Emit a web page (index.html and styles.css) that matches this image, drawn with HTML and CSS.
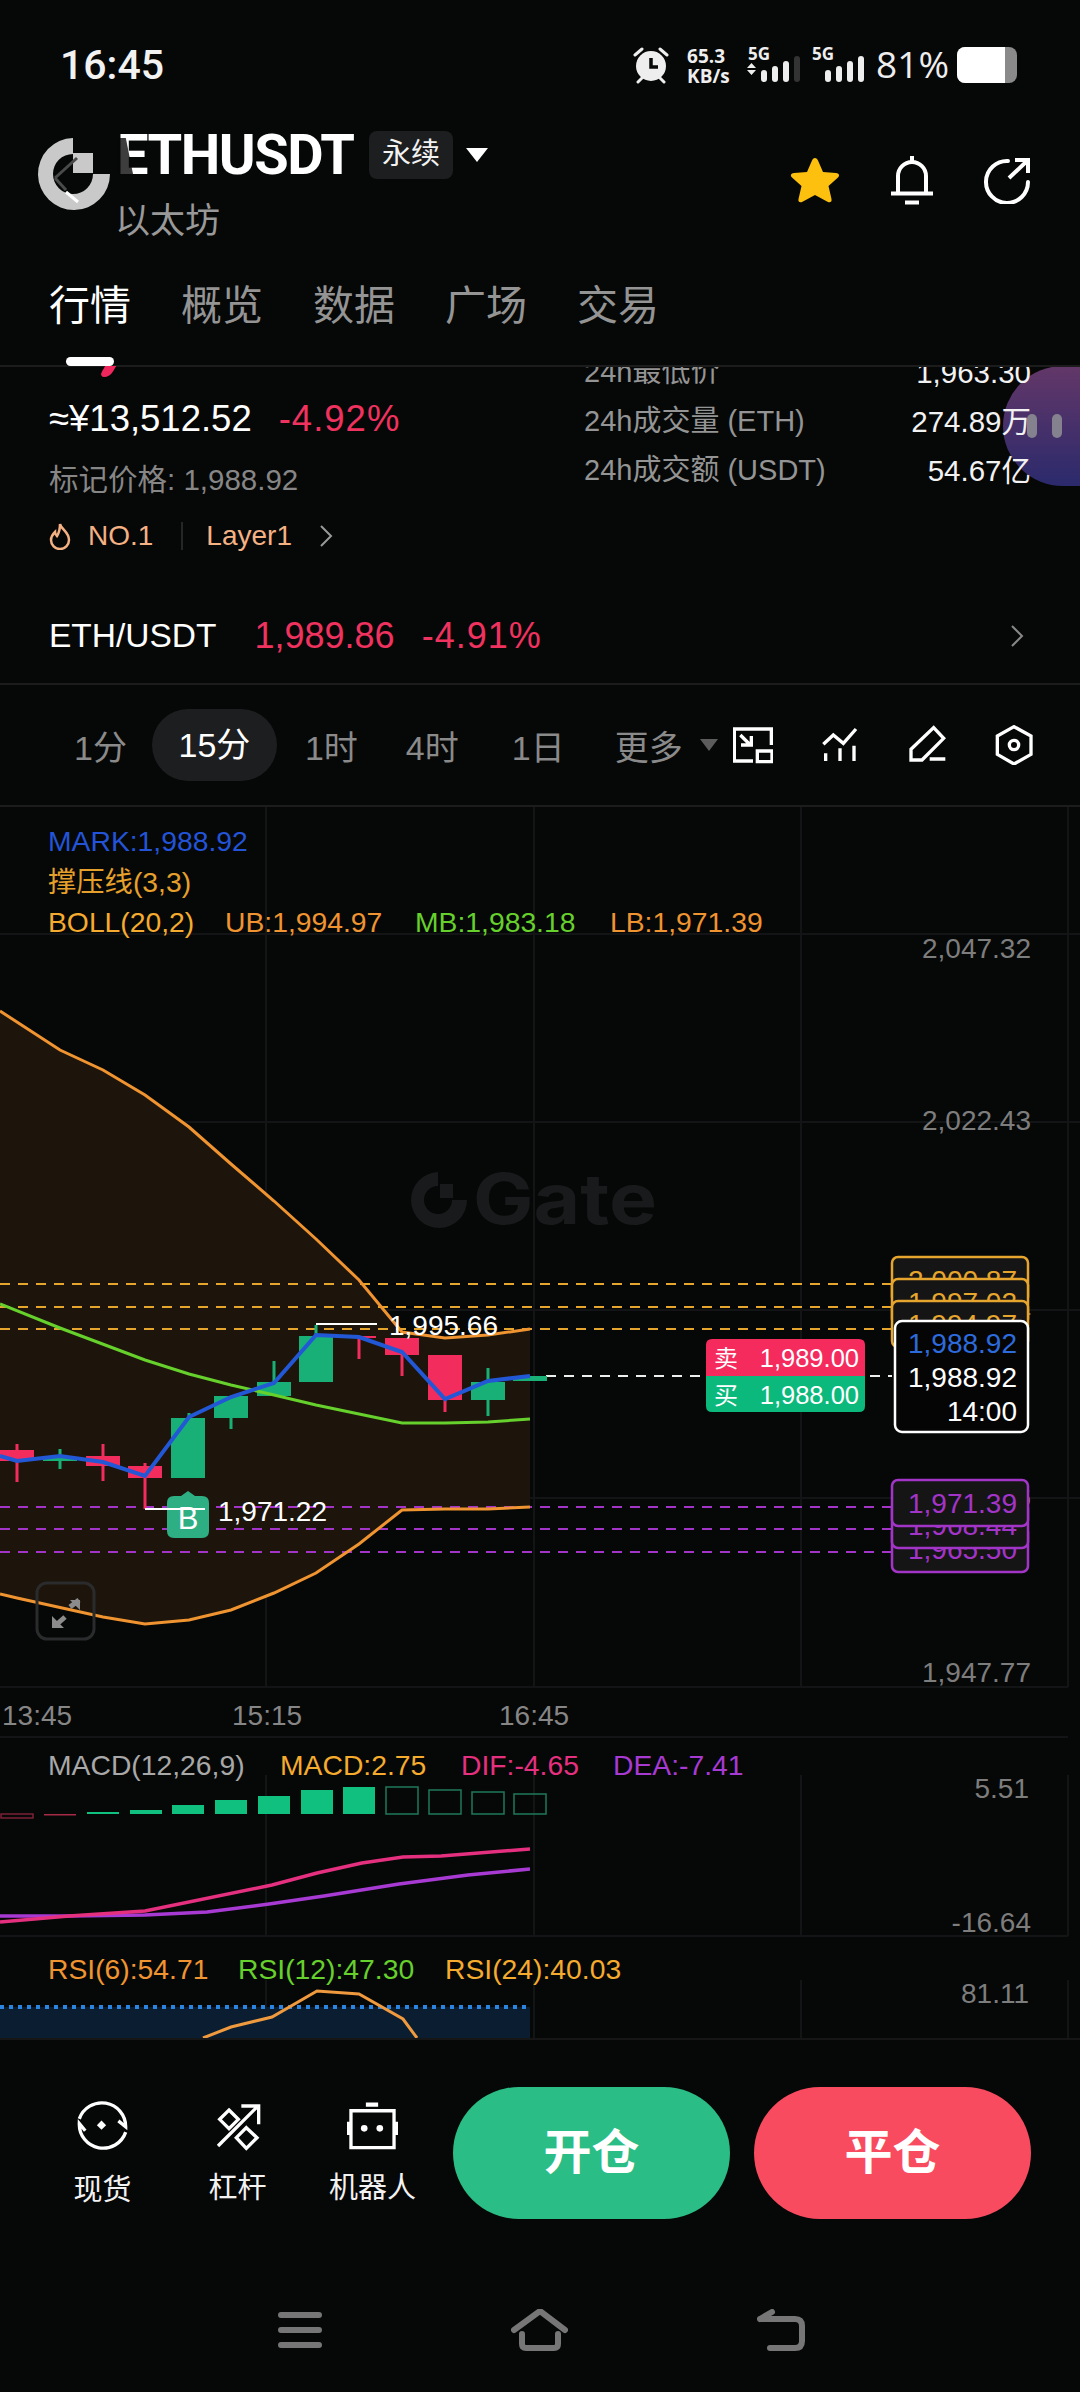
FILE: index.html
```html
<!DOCTYPE html>
<html lang="zh">
<head>
  <meta charset="UTF-8">
  <meta name="viewport" content="width=device-width, initial-scale=1.0">
  <title>ETHUSDT</title>
  <link rel="stylesheet" href="styles.css">
</head>
<body>
  <div class="screen">

    <div class="status-bar">
      <span class="status-time">16:45</span>
      <div class="status-icons">
        <svg class="alarm" width="36" height="38" viewBox="0 0 36 38">
          <circle cx="18" cy="20" r="15" fill="#eee"/>
          <path d="M18 12v9h7" fill="none" stroke="#060707" stroke-width="3.5"/>
          <path d="M2 9l7-6M34 9l-7-6M5 36l4-4M31 36l-4-4" stroke="#eee" stroke-width="3" stroke-linecap="round"/>
        </svg>
        <div class="net-speed"><span>65.3</span><span>KB/s</span></div>
        <div class="signal">
          <span class="signal-label">5G</span>
          <svg width="54" height="34" viewBox="0 0 54 34">
            <path d="M0 10l4.500-5 4.500 5zM0 12l4.500 5 4.500-5z" transform="translate(0 6)" fill="#eee"/>
            <rect x="14" y="18" width="6" height="12" rx="3" fill="#eee"/>
            <rect x="25" y="14" width="6" height="16" rx="3" fill="#eee"/>
            <rect x="36" y="9" width="6" height="21" rx="3" fill="#eee"/>
            <rect x="47" y="4" width="6" height="26" rx="3" fill="#333"/>
          </svg>
        </div>
        <div class="signal signal-second">
          <span class="signal-label">5G</span>
          <svg width="54" height="34" viewBox="0 0 54 34">
            <rect x="14" y="18" width="6" height="12" rx="3" fill="#eee"/>
            <rect x="25" y="14" width="6" height="16" rx="3" fill="#eee"/>
            <rect x="36" y="9" width="6" height="21" rx="3" fill="#eee"/>
            <rect x="47" y="4" width="6" height="26" rx="3" fill="#eee"/>
          </svg>
        </div>
        <span class="battery-pct">81%</span>
        <div class="battery"><div class="battery-level"></div></div>
      </div>
    </div>

    <div class="header">
      <svg class="float-logo" width="100" height="74" viewBox="37 138 100 74">
        <path d="M73 138A36 36 0 1 0 110 174H93A20 20 0 1 1 73 154Z" fill="#c9c9c9"/>
        <rect x="73" y="153" width="20" height="20" fill="#c9c9c9"/>
        <path d="M77 158L55 178" stroke="#4a4a4a" stroke-width="3"/>
        <path d="M55 178L66 190" stroke="#4a4a4a" stroke-width="3"/>
        <path d="M66 192L78 202" stroke="#fff" stroke-width="3"/>
        <path d="M117 134H125L133 174H117Z" fill="#060707" fill-opacity="0.78"/>
      </svg>
      <div class="title-block">
        <div class="title-row">
          <span class="symbol">ETHUSDT</span>
          <span class="tag">永续</span>
          <span class="caret"></span>
        </div>
        <div class="subtitle">以太坊</div>
      </div>
      <div class="header-actions">
        <svg width="50" height="48" viewBox="0 0 50 48">
          <path d="M25 2c1.500 0 2.300 1 3 2.500l5 11.500 13 1c3 .3 4 2.500 2 4.500l-9.500 8.500 3 13c.6 3-1.500 4-4 2.700L25 39l-12.500 6.700c-2.500 1.300-4.600.3-4-2.700l3-13L2 21.500C0 19.500 1 17.300 4 17l13-1 5-11.500C22.700 3 23.500 2 25 2z" fill="#fdc00f"/>
        </svg>
        <svg width="44" height="50" viewBox="0 0 44 50">
          <path d="M22 1v6M8 38V21a14 14 0 0 1 28 0v17M1 38.500h42M15 47.500h14" fill="none" stroke="#fff" stroke-width="4"/>
        </svg>
        <svg width="46" height="47" viewBox="0 0 46 47">
          <path d="M24 4A21 21 0 1 0 44 25" fill="none" stroke="#fff" stroke-width="4" stroke-linecap="round"/>
          <path d="M25 21L43 4M31 3h13v13" fill="none" stroke="#fff" stroke-width="4"/>
        </svg>
      </div>
    </div>

    <div class="tabs">
      <div class="tab tab-active">行情</div>
      <div class="tab">概览</div>
      <div class="tab">数据</div>
      <div class="tab">广场</div>
      <div class="tab">交易</div>
    </div>

    <div class="info">
      <div class="bubble"><span></span><span></span></div>
      <div class="info-left">
        <div class="price-row">
          <span class="price-cny">≈¥13,512.52</span>
          <span class="price-change down">-4.92%</span>
        </div>
        <div class="mark-price">标记价格: 1,988.92</div>
        <div class="chips">
          <svg width="22" height="28" viewBox="0 0 22 28">
            <path d="M11 2c1 5 9 8 9 16a9 9 0 0 1-18 0c0-4 2-6 4-8 0 2 1 3 2 4 2-3 3-7 3-12z" fill="none" stroke="#f4b183" stroke-width="2.500"/>
          </svg>
          <span class="chip-text">NO.1</span>
          <span class="chip-sep"></span>
          <span class="chip-text">Layer1</span>
          <svg class="chevron-small" width="14" height="24" viewBox="0 0 14 24">
            <path d="M2 2l10 10L2 22" fill="none" stroke="#999" stroke-width="2"/>
          </svg>
        </div>
      </div>
      <div class="info-right">
        <div class="stat"><span>24h最低价</span><b>1,963.30</b></div>
        <div class="stat"><span>24h成交量 (ETH)</span><b>274.89万</b></div>
        <div class="stat"><span>24h成交额 (USDT)</span><b>54.67亿</b></div>
      </div>
    </div>

    <div class="pair-row">
      <span class="pair-name">ETH/USDT</span>
      <span class="pair-price down">1,989.86</span>
      <span class="pair-change down">-4.91%</span>
      <svg class="pair-chevron" width="14" height="24" viewBox="0 0 14 24">
        <path d="M2 2l10 10L2 22" fill="none" stroke="#888" stroke-width="2"/>
      </svg>
    </div>

    <div class="frames">
      <span class="frame frame-1m">1分</span>
      <span class="frame frame-active">15分</span>
      <span class="frame frame-1h">1时</span>
      <span class="frame frame-4h">4时</span>
      <span class="frame frame-1d">1日</span>
      <span class="frame frame-more">更多</span>
      <span class="more-caret"></span>
      <div class="frame-tools">
        <svg width="40" height="40" viewBox="40 35 120 120" class="tool-svg">
          <path d="M100 143H44V47H155V95M113 113h44v32h-44zM62 65L92 95M64 95H95V68"/>
        </svg>
        <svg width="40" height="40" viewBox="300 35 120 120" class="tool-svg">
          <path d="M310 93L340 65L370 90L408 47M317 120V143M360 105V143M402 97V143"/>
        </svg>
        <svg width="40" height="40" viewBox="560 35 120 120" class="tool-svg">
          <path d="M640 43L670 75L605 140H572V108ZM628 137H675"/>
        </svg>
        <svg width="40" height="40" viewBox="822 35 120 120" class="tool-svg">
          <path d="M882 40L933 68V123L882 152L832 123V68Z"/>
          <circle cx="882" cy="95" r="14"/>
        </svg>
      </div>
    </div>

    <svg class="chart" width="1080" height="1231" viewBox="0 807 1080 1231">
      <!-- grid -->
      <path class="grid" d="M266 807V1687M534 807V1687M801 807V1687M1068 807V1687M0 934H1080M0 1122H1080M0 1310H1080M0 1498H1080M0 1687H1068M0 1737H1068M266 1775V1936M534 1775V1936M801 1775V1936M1068 1775V1936M0 1936H1068M266 1980V2038M534 1980V2038M801 1980V2038M1068 1980V2038"/>

      <!-- watermark -->
      <path class="mark-ring" d="M438 1172A28 28 0 1 0 467 1200H452A14 14 0 1 1 438 1186ZM440 1184h13v14h-13z"/>
      <text class="mark-text" x="473" y="1224" textLength="184" lengthAdjust="spacingAndGlyphs">Gate</text>

      <!-- axis -->
      <text class="axis" x="1031" y="958">2,047.32</text>
      <text class="axis" x="1031" y="1130">2,022.43</text>
      <text class="axis" x="1031" y="1319">1,997.54</text>
      <text class="axis" x="1031" y="1507">1,972.66</text>
      <text class="axis" x="1031" y="1682">1,947.77</text>

      <!-- bollinger band -->
      <polygon class="band" points="0,1011 60,1050 103,1070 145,1095 189,1127 231,1164 274,1201 316,1239 359,1280 402,1332 445,1338 488,1335 530,1329 530,1507 488,1509 445,1509 402,1510 359,1544 316,1573 274,1593 231,1610 189,1620 145,1624 103,1617 17,1598 0,1594"/>

      <!-- price lines -->
      <path class="dash-orange" d="M0 1284H892M0 1307H892M0 1329H892"/>
      <path class="dash-purple" d="M0 1507H892M0 1529H892M0 1552H892"/>
      <path class="dash-white" d="M546 1376H892"/>

      <!-- candles -->
      <path class="wick-up" d="M60 1449V1469M189 1413V1420M231 1416V1429M274 1361V1384M316 1325V1338M488 1368V1416"/>
      <path class="wick-down" d="M17 1444V1482M103 1444V1481M145 1463V1509M359 1336V1359M402 1338V1376M445 1355V1412"/>
      <rect class="c-down" x="0" y="1450" width="34" height="11"/>
      <rect class="c-up" x="43" y="1457" width="34" height="4"/>
      <rect class="c-down" x="86" y="1456" width="34" height="10"/>
      <rect class="c-down" x="128" y="1466" width="34" height="12"/>
      <rect class="c-up" x="171" y="1418" width="34" height="60"/>
      <rect class="c-up" x="214" y="1396" width="34" height="22"/>
      <rect class="c-up" x="257" y="1382" width="34" height="14"/>
      <rect class="c-up" x="299" y="1336" width="34" height="46"/>
      <rect class="c-down" x="342" y="1336" width="34" height="2"/>
      <rect class="c-down" x="385" y="1338" width="34" height="17"/>
      <rect class="c-down" x="428" y="1355" width="34" height="45"/>
      <rect class="c-up" x="471" y="1382" width="34" height="18"/>
      <rect class="c-up" x="513" y="1376" width="34" height="5"/>

      <!-- boll lines + mark line -->
      <polyline class="ln-ub" points="0,1011 60,1050 103,1070 145,1095 189,1127 231,1164 274,1201 316,1239 359,1280 402,1332 445,1338 488,1335 530,1329"/>
      <polyline class="ln-mb" points="0,1304 60,1328 145,1360 189,1374 231,1385 274,1395 316,1405 359,1414 402,1423 445,1423 488,1422 530,1419"/>
      <polyline class="ln-ub" points="0,1594 17,1598 103,1617 145,1624 189,1620 231,1610 274,1593 316,1573 359,1544 402,1510 445,1509 488,1509 530,1507"/>
      <polyline class="ln-mark" points="0,1456 17,1461 60,1456 103,1462 145,1476 189,1417 231,1397 274,1383 316,1335 359,1337 402,1352 445,1399 488,1381 530,1376"/>

      <!-- high / low marks -->
      <path class="hl-line" d="M316 1324H377M145 1509H205"/>
      <text class="hl-text" x="389" y="1335">1,995.66</text>
      <path class="badge-b" d="M174 1496H181L188 1491L195 1496H202Q209 1496 209 1503V1531Q209 1538 202 1538H174Q167 1538 167 1531V1503Q167 1496 174 1496Z"/>
      <path class="hl-line" d="M167 1509H205"/>
      <text class="badge-text" x="188" y="1529">B</text>
      <text class="hl-text" x="218" y="1521">1,971.22</text>

      <!-- expand button -->
      <rect class="expand-box" x="37" y="1583" width="57" height="56" rx="10"/>
      <path class="expand-arrow" d="M79 1600L70 1607M56 1625L65 1617"/>
      <path class="expand-head" d="M70 1600H80V1610ZM52 1616V1628H64Z"/>

      <!-- sell / buy tag -->
      <path class="tag-sell" d="M712 1339H859Q865 1339 865 1345V1376H706V1345Q706 1339 712 1339Z"/>
      <path class="tag-buy" d="M706 1376H865V1406Q865 1412 859 1412H712Q706 1412 706 1406Z"/>
      <text class="tag-text" x="714" y="1367">卖</text>
      <text class="tag-num" x="859" y="1367">1,989.00</text>
      <text class="tag-text" x="714" y="1404">买</text>
      <text class="tag-num" x="859" y="1404">1,988.00</text>

      <!-- orange labels -->
      <rect class="box-orange" x="892" y="1257" width="136" height="46" rx="6"/>
      <text class="box-text-orange" x="1017" y="1290">2,000.87</text>
      <rect class="box-orange" x="892" y="1279" width="136" height="46" rx="6"/>
      <text class="box-text-orange" x="1017" y="1312">1,997.02</text>
      <rect class="box-orange" x="892" y="1301" width="136" height="46" rx="6"/>
      <text class="box-text-orange" x="1017" y="1334">1,994.97</text>

      <!-- purple labels -->
      <rect class="box-purple" x="892" y="1526" width="136" height="46" rx="6"/>
      <text class="box-text-purple" x="1017" y="1559">1,965.50</text>
      <rect class="box-purple" x="892" y="1502" width="136" height="46" rx="6"/>
      <text class="box-text-purple" x="1017" y="1535">1,968.44</text>
      <rect class="box-purple" x="892" y="1480" width="136" height="46" rx="6"/>
      <text class="box-text-purple" x="1017" y="1513">1,971.39</text>

      <!-- current price box -->
      <rect class="box-white" x="895" y="1321" width="133" height="111" rx="7"/>
      <text class="box-text-blue" x="1017" y="1353">1,988.92</text>
      <text class="box-text-white" x="1017" y="1387">1,988.92</text>
      <text class="box-text-white" x="1017" y="1421">14:00</text>

      <!-- legends -->
      <text class="lg lg-blue" x="48" y="851">MARK:1,988.92</text>
      <text class="lg lg-amber" x="48" y="892">撑压线(3,3)</text>
      <text class="lg lg-yellow" x="48" y="932">BOLL(20,2)</text>
      <text class="lg lg-orange" x="225" y="932">UB:1,994.97</text>
      <text class="lg lg-green" x="415" y="932">MB:1,983.18</text>
      <text class="lg lg-orange" x="610" y="932">LB:1,971.39</text>

      <!-- time axis -->
      <text class="time" x="2" y="1725">13:45</text>
      <text class="time" x="232" y="1725">15:15</text>
      <text class="time" x="499" y="1725">16:45</text>

      <!-- macd -->
      <text class="lg lg-gray" x="48" y="1775">MACD(12,26,9)</text>
      <text class="lg lg-yellow" x="280" y="1775">MACD:2.75</text>
      <text class="lg lg-pink" x="461" y="1775">DIF:-4.65</text>
      <text class="lg lg-purple" x="613" y="1775">DEA:-7.41</text>
      <text class="axis" x="1029" y="1798">5.51</text>
      <text class="axis" x="1031" y="1932">-16.64</text>
      <rect class="bar-hollow-down" x="1" y="1814" width="32" height="4"/>
      <rect class="bar-down" x="44" y="1814" width="32" height="1.500"/>
      <rect class="bar-up" x="87" y="1812" width="32" height="2"/>
      <rect class="bar-up" x="130" y="1810" width="32" height="4"/>
      <rect class="bar-up" x="172" y="1805" width="32" height="9"/>
      <rect class="bar-up" x="215" y="1800" width="32" height="14"/>
      <rect class="bar-up" x="258" y="1796" width="32" height="18"/>
      <rect class="bar-up" x="301" y="1790" width="32" height="24"/>
      <rect class="bar-up" x="343" y="1787" width="32" height="27"/>
      <rect class="bar-hollow-up" x="386" y="1787" width="32" height="27"/>
      <rect class="bar-hollow-up" x="429" y="1790" width="32" height="24"/>
      <rect class="bar-hollow-up" x="472" y="1792" width="32" height="22"/>
      <rect class="bar-hollow-up" x="514" y="1794" width="32" height="20"/>
      <polyline class="ln-dea" points="0,1916 69,1916 145,1915 207,1912 269,1904 324,1896 399,1884 468,1875 530,1869"/>
      <polyline class="ln-dif" points="0,1922 69,1916 145,1911 272,1885 317,1873 362,1863 403,1857 441,1856 530,1849"/>

      <!-- rsi -->
      <text class="lg lg-orange" x="48" y="1979">RSI(6):54.71</text>
      <text class="lg lg-green" x="238" y="1979">RSI(12):47.30</text>
      <text class="lg lg-yellow" x="445" y="1979">RSI(24):40.03</text>
      <text class="axis" x="1029" y="2003">81.11</text>
      <rect class="rsi-fill" x="0" y="2007" width="530" height="31"/>
      <path class="rsi-dots" d="M0 2007H530"/>
      <polyline class="ln-rsi" points="203,2038 231,2027 272,2017 317,1991 359,1994 403,2019 417,2038"/>
    </svg>

    <div class="actions">
      <div class="action">
        <svg width="53" height="53" viewBox="50 25 160 160" class="action-svg">
          <path d="M60 82A72 72 0 0 1 200 106L178 88M200 122A72 72 0 0 1 60 96L78 118"/>
          <path class="fill-white" d="M127 87L141 101L127 115L113 101Z"/>
        </svg>
        <span>现货</span>
      </div>
      <div class="action">
        <svg width="50" height="50" viewBox="455 30 150 150" class="action-svg">
          <path d="M503 57L531 85L503 113L475 85ZM555 110L587 140L555 172L525 140ZM470 165L590 45M540 45H592V100"/>
        </svg>
        <span>杠杆</span>
      </div>
      <div class="action">
        <svg width="53" height="50" viewBox="860 28 160 150" class="action-svg">
          <path d="M875 57H1005V168H875Z"/>
          <path class="fill-white" d="M920 32H957V45H920ZM863 90H875V130H863ZM1005 90H1017V130H1005Z"/>
          <circle class="fill-white" cx="915" cy="110" r="10"/>
          <circle class="fill-white" cx="962" cy="110" r="10"/>
        </svg>
        <span>机器人</span>
      </div>
      <div class="btn btn-open">开仓</div>
      <div class="btn btn-close">平仓</div>
    </div>

    <div class="nav">
      <svg width="44" height="36" viewBox="0 0 44 36" class="nav-svg">
        <path d="M3 3H41M3 18H41M3 33H41"/>
      </svg>
      <svg width="57" height="42" viewBox="0 0 57 42" class="nav-svg nav-home">
        <path d="M3 21L29 2L54 21M11 25V35Q11 39 15 39H43Q47 39 47 35V25"/>
      </svg>
      <svg width="48" height="42" viewBox="0 0 48 42" class="nav-svg nav-back">
        <path d="M3 10L15 3M3 10H38Q45 10 45 17V32Q45 39 38 39H13"/>
      </svg>
    </div>

  </div>
</body>
</html>
```

FILE: styles.css
```css
* {
  box-sizing: border-box;
}
body {
  margin: 0;
  background-color: #060707;
  color: #fff;
  font-family: "Liberation Sans", "Noto Sans CJK SC", sans-serif;
}
.screen {
  position: relative;
  width: 1080px;
  height: 2392px;
  overflow: hidden;
  background-color: #060707;
}
svg {
  display: block;
  flex-shrink: 0;
}

/* status bar */
.status-bar {
  height: 100px;
  display: flex;
  align-items: flex-start;
  justify-content: space-between;
  padding: 46px 63px 0 60px;
}
.status-time {
  font-family: Roboto, sans-serif;
  font-weight: 500;
  font-size: 41px;
  line-height: 38px;
  color: #f2f2f2;
}
.status-icons {
  display: flex;
  align-items: flex-start;
  height: 38px;
  color: #eee;
  font-family: "Open Sans", sans-serif;
}
.net-speed {
  display: flex;
  flex-direction: column;
  margin-left: 18px;
  width: 50px;
  font-size: 19px;
  font-weight: 700;
  line-height: 20px;
}
.signal {
  position: relative;
  width: 54px;
  height: 38px;
  margin-left: 10px;
}
.signal svg {
  position: absolute;
  top: 6px;
  left: 0;
}
.signal-label {
  position: absolute;
  top: -1px;
  left: 1px;
  font-size: 17px;
  font-weight: 700;
  line-height: 18px;
  z-index: 1;
}
.signal-second {
  margin-left: 10px;
}
.battery-pct {
  margin-left: 11px;
  font-size: 37px;
  line-height: 40px;
  margin-top: -2px;
}
.battery {
  width: 60px;
  height: 36px;
  margin-left: 8px;
  margin-top: 1px;
  background-color: #8a8a8a;
  border-radius: 8px;
  overflow: hidden;
}
.battery-level {
  width: 48px;
  height: 100%;
  background-color: #fff;
}

/* header */
.header {
  height: 150px;
  display: flex;
  justify-content: space-between;
  padding: 30px 50px 0 117px;
}
.float-logo {
  position: absolute;
  top: 138px;
  left: 37px;
  z-index: 2;
}
.title-row {
  display: flex;
  align-items: center;
  height: 50px;
}
.symbol {
  width: 233px;
  font-family: Roboto, sans-serif;
  font-size: 56px;
  font-weight: 700;
  line-height: 50px;
  letter-spacing: -1.500px;
  white-space: nowrap;
}
.tag {
  margin-left: 19px;
  width: 84px;
  height: 48px;
  line-height: 46px;
  text-align: center;
  font-size: 29px;
  color: #f2f2f2;
  background-color: #1d1e1f;
  border-radius: 8px;
}
.caret {
  margin-left: 13px;
  width: 0;
  height: 0;
  border-left: 11px solid transparent;
  border-right: 11px solid transparent;
  border-top: 14px solid #fff;
}
.subtitle {
  margin-top: 21px;
  margin-left: -2px;
  font-size: 35px;
  line-height: 40px;
  color: #999;
}
.header-actions {
  display: flex;
  align-items: center;
  gap: 50px;
  height: 50px;
  margin-top: 25px;
}

/* tabs */
.tabs {
  position: relative;
  height: 117px;
  display: flex;
  gap: 50px;
  padding: 31px 0 0 49px;
  border-bottom: 2px solid #1c1c1d;
}
.tab {
  font-size: 41px;
  line-height: 50px;
  color: #949494;
}
.tab-active {
  color: #fff;
  position: relative;
}
.tab-active::after {
  content: "";
  position: absolute;
  top: 76px;
  left: 17px;
  width: 48px;
  height: 9px;
  background-color: #fff;
  border-radius: 5px;
}
.tab-active::before {
  content: "";
  position: absolute;
  top: 85px;
  left: 53px;
  width: 11px;
  height: 11px;
  background-color: #f0275c;
  border-radius: 0 0 8px 8px;
  transform: skewX(-30deg);
  z-index: 2;
}

/* price info */
.info {
  position: relative;
  height: 206px;
  display: flex;
  justify-content: space-between;
  padding: 0 49px;
  overflow: hidden;
}
.bubble {
  position: absolute;
  top: -1px;
  right: 0;
  width: 77px;
  height: 120px;
  display: flex;
  align-items: center;
  gap: 15px;
  background: linear-gradient(180deg, #633768, #2b2a6c);
  border-radius: 60px 0 0 60px;
  padding-left: 24px;
}
.bubble span {
  width: 10px;
  height: 24px;
  background-color: #85828f;
  border-radius: 5px;
}
.info-left {
  padding-top: 32px;
}
.price-row {
  display: flex;
  font-size: 36.500px;
  line-height: 40px;
}
.price-change {
  margin-left: 27px;
  letter-spacing: 1px;
}
.down {
  color: #f0325f;
}
.mark-price {
  margin-top: 24px;
  font-size: 29.500px;
  line-height: 34px;
  color: #868686;
}
.chips {
  display: flex;
  align-items: center;
  margin-top: 19px;
  height: 40px;
  font-size: 28px;
  color: #f4b183;
}
.chip-text {
  margin-left: 17px;
}
.chip-sep {
  width: 2px;
  height: 28px;
  margin-left: 28px;
  margin-right: 6px;
  background-color: #262626;
}
.chevron-small {
  margin-left: 27px;
}
.info-right {
  position: relative;
  width: 447px;
  margin-top: -19px;
}
.stat {
  display: flex;
  justify-content: space-between;
  height: 49px;
  line-height: 49px;
  font-size: 29px;
  color: #949494;
}
.stat b {
  font-size: 29.500px;
  font-weight: 400;
  color: #f2f2f2;
}

/* spot pair */
.pair-row {
  height: 112px;
  display: flex;
  align-items: center;
  padding: 16px 56px 0 49px;
  border-bottom: 2px solid #1c1c1d;
}
.pair-name {
  font-size: 33.500px;
}
.pair-price {
  margin-left: 38px;
  font-size: 36px;
}
.pair-change {
  margin-left: 27px;
  font-size: 36px;
  letter-spacing: 1px;
}
.pair-chevron {
  margin-left: auto;
}

/* time frames */
.frames {
  height: 122px;
  display: flex;
  align-items: center;
  padding-left: 74px;
  border-bottom: 2px solid #1c1c1d;
  font-size: 34px;
  color: #8a8a8a;
}
.frame-active {
  width: 125px;
  height: 72px;
  margin-left: 25px;
  line-height: 72px;
  text-align: center;
  color: #fff;
  background-color: #1d1e1f;
  border-radius: 36px;
}
.frame-1h {
  margin-left: 28px;
}
.frame-4h {
  margin-left: 48px;
}
.frame-1d {
  margin-left: 53px;
}
.frame-more {
  margin-left: 50px;
}
.more-caret {
  margin-left: 17px;
  width: 0;
  height: 0;
  border-left: 9px solid transparent;
  border-right: 9px solid transparent;
  border-top: 12px solid #5c5c5c;
}
.frame-tools {
  display: flex;
  gap: 47px;
  margin-left: 15px;
}
.tool-svg {
  fill: none;
  stroke: #fff;
  stroke-width: 10;
}

/* chart */
.chart {
  font-family: "Liberation Sans", "Noto Sans CJK SC", sans-serif;
  font-size: 28px;
}
.chart polyline,
.chart path {
  fill: none;
}
.grid {
  stroke: #131415;
  stroke-width: 2;
}
.chart .mark-ring {
  fill: #191a1b;
}
.mark-text {
  fill: #191a1b;
  font-family: Inter, sans-serif;
  font-weight: 700;
  font-size: 70px;
}
.axis {
  fill: #7d7d7d;
  text-anchor: end;
}
.band {
  fill: #1d150b;
}
.dash-orange {
  stroke: #e6a52c;
  stroke-width: 2;
  stroke-dasharray: 10 8;
}
.dash-purple {
  stroke: #a334c8;
  stroke-width: 2;
  stroke-dasharray: 10 8;
}
.dash-white {
  stroke: #eee;
  stroke-width: 2;
  stroke-dasharray: 10 8;
}
.wick-up {
  stroke: #18b077;
  stroke-width: 3;
}
.wick-down {
  stroke: #f32c5e;
  stroke-width: 3;
}
.c-up {
  fill: #18b077;
}
.c-down {
  fill: #f32c5e;
}
.ln-ub {
  stroke: #ef9430;
  stroke-width: 3;
}
.ln-mb {
  stroke: #66d02c;
  stroke-width: 3;
}
.ln-mark {
  stroke: #2258d6;
  stroke-width: 4;
}
.hl-line {
  stroke: #fff;
  stroke-width: 2;
}
.hl-text {
  fill: #fff;
}
.chart .badge-b {
  fill: #2dae83;
}
.badge-text {
  fill: #fff;
  font-size: 31px;
  text-anchor: middle;
}
.expand-box {
  fill: none;
  stroke: #2a2b2c;
  stroke-width: 3;
}
.expand-arrow {
  stroke: #8c8c8c;
  stroke-width: 5;
}
.chart .expand-head {
  fill: #8c8c8c;
}
.chart .tag-sell {
  fill: #f52b5e;
}
.chart .tag-buy {
  fill: #0cb97c;
}
.tag-text {
  fill: #fff;
  font-size: 24px;
}
.tag-num {
  fill: #fff;
  font-size: 25.500px;
  text-anchor: end;
}
.box-orange {
  fill: #151516;
  stroke: #e6a52c;
  stroke-width: 2.500;
}
.box-purple {
  fill: #151516;
  stroke: #a334c8;
  stroke-width: 2.500;
}
.box-text-orange {
  fill: #e6a52c;
  text-anchor: end;
}
.box-text-purple {
  fill: #a334c8;
  text-anchor: end;
}
.box-white {
  fill: #050505;
  stroke: #fff;
  stroke-width: 2.500;
}
.box-text-blue {
  fill: #2d6bdc;
  text-anchor: end;
}
.box-text-white {
  fill: #fff;
  text-anchor: end;
}
.lg {
  font-size: 28.300px;
}
.lg-blue {
  fill: #2354d8;
}
.lg-amber {
  fill: #e5a02c;
}
.lg-yellow {
  fill: #f5ab2e;
}
.lg-orange {
  fill: #ef9430;
}
.lg-green {
  fill: #66d02c;
}
.lg-gray {
  fill: #a8a8a8;
}
.lg-pink {
  fill: #e5307f;
}
.lg-purple {
  fill: #a83ad4;
}
.time {
  fill: #868686;
}
.bar-up {
  fill: #0fc07f;
}
.bar-down {
  fill: #a52a45;
}
.bar-hollow-up {
  fill: none;
  stroke: #1f7a5c;
  stroke-width: 1.500;
}
.bar-hollow-down {
  fill: none;
  stroke: #7c2238;
  stroke-width: 1.500;
}
.ln-dif {
  stroke: #e5307f;
  stroke-width: 3.500;
}
.ln-dea {
  stroke: #a83ad4;
  stroke-width: 3.500;
}
.rsi-fill {
  fill: #0b1d30;
}
.rsi-dots {
  stroke: #2b84e0;
  stroke-width: 4;
  stroke-dasharray: 4 5;
}
.ln-rsi {
  stroke: #ef9a3e;
  stroke-width: 3;
}

/* bottom actions */
.actions {
  height: 228px;
  display: flex;
  align-items: center;
  padding-left: 35px;
  border-top: 2px solid #161617;
}
.action {
  width: 135px;
  display: flex;
  flex-direction: column;
  align-items: center;
  gap: 20px;
  font-size: 29px;
  line-height: 34px;
  color: #f2f2f2;
}
.action-svg {
  fill: none;
  stroke: #fff;
  stroke-width: 10;
}
.action-svg .fill-white {
  fill: #fff;
  stroke: none;
}
.btn {
  width: 277px;
  height: 132px;
  line-height: 132px;
  text-align: center;
  font-size: 48px;
  font-weight: 700;
  border-radius: 66px;
}
.btn-open {
  margin-left: 13px;
  background-color: #2abd85;
}
.btn-close {
  margin-left: 24px;
  background-color: #f94b60;
}

/* android nav */
.nav {
  display: flex;
  align-items: center;
  gap: 189px;
  padding: 43px 0 0 278px;
}
.nav-svg {
  fill: none;
  stroke: #767676;
  stroke-width: 6;
  stroke-linecap: round;
}
```
